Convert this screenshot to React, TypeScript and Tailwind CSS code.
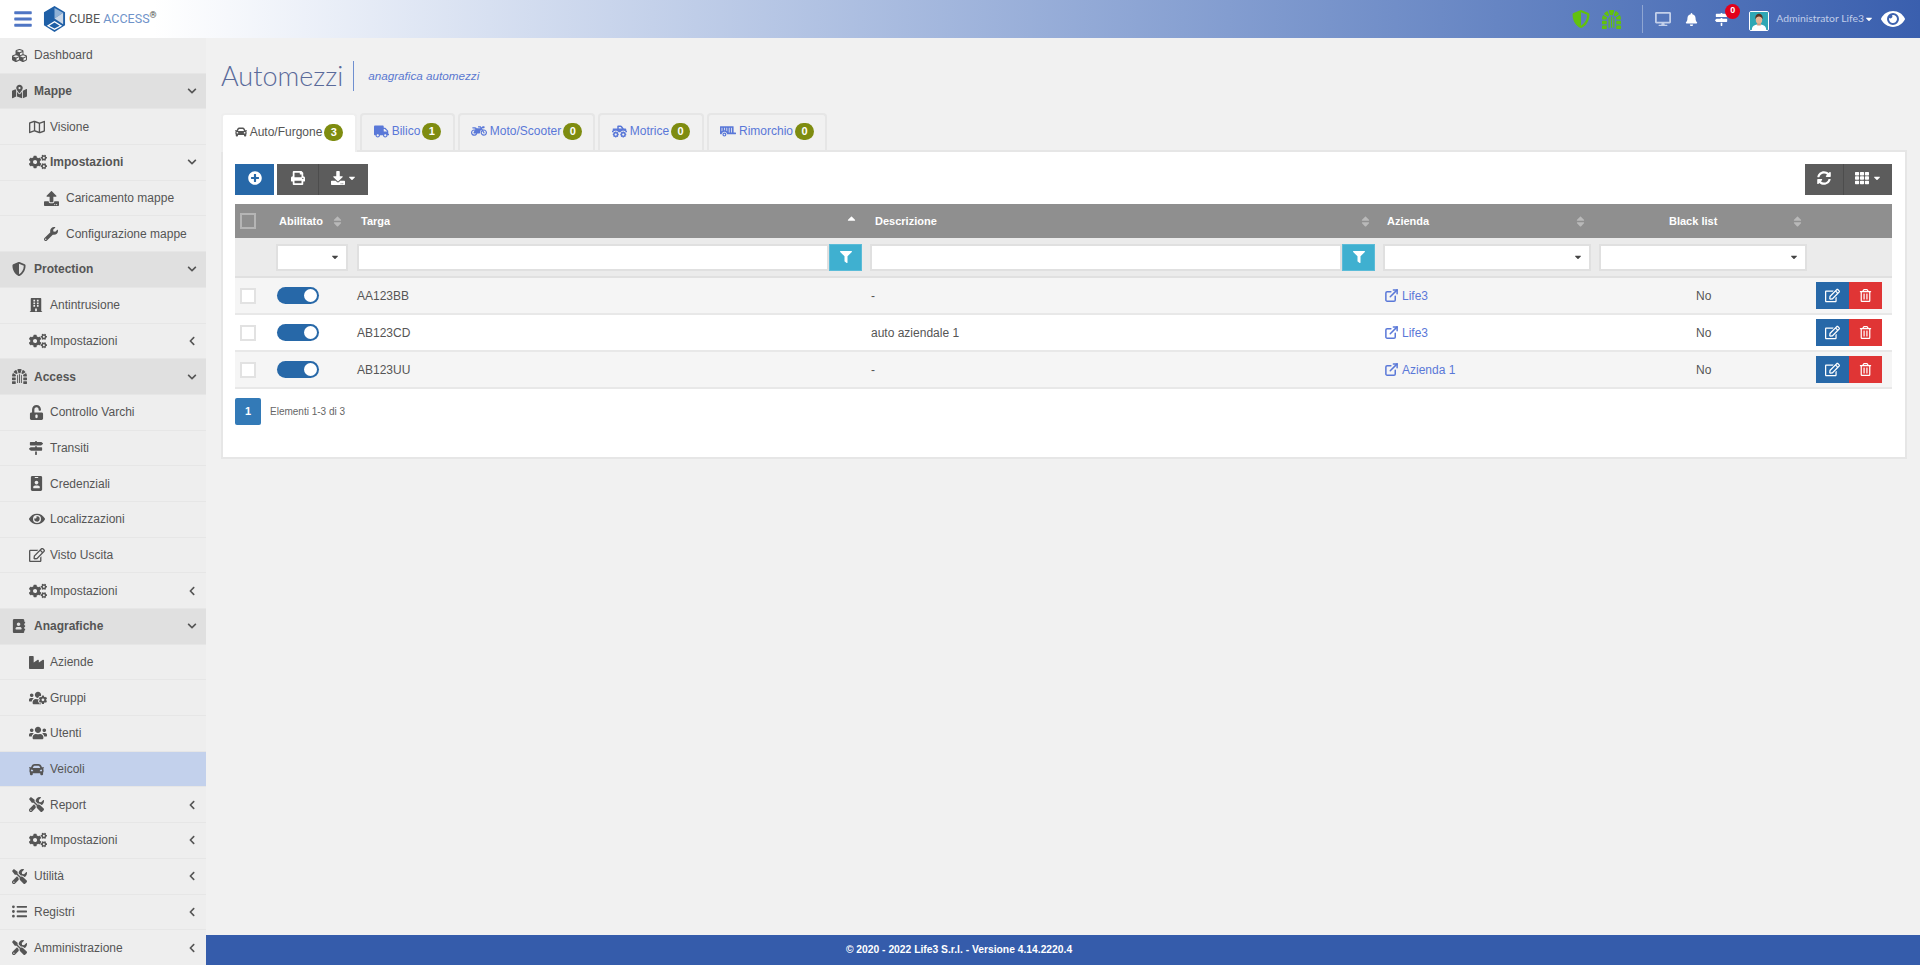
import type { ReactNode } from "react";
import { ExternalLink } from "lucide-react";
import {
  FaAddressBook, FaBars, FaBell, FaBuilding, FaCar, FaChevronDown, FaChevronLeft, FaCogs, FaCubes, FaDesktop,
  FaDownload, FaDungeon, FaEye, FaFilter, FaIdBadge, FaIndustry, FaListUl, FaMapMarkedAlt, FaMapSigns, FaMotorcycle,
  FaPlusCircle, FaPrint, FaRegEdit, FaRegMap, FaRegTrashAlt, FaShieldAlt, FaSort, FaSortUp, FaSyncAlt, FaTh, FaTools,
  FaTrailer, FaTruck, FaTruckMonster, FaUnlockAlt, FaUpload, FaUsers, FaUsersCog, FaWrench, FaCaretDown,
} from "react-icons/fa";

type Item = { label: string; icon: ReactNode; level: 0 | 1 | 2; section?: boolean; bold?: boolean; arrow?: "down" | "left"; active?: boolean };

const menu: Item[] = [
  { label: "Dashboard", icon: <FaCubes size={15} />, level: 0 },
  { label: "Mappe", icon: <FaMapMarkedAlt size={15} />, level: 0, section: true, bold: true, arrow: "down" },
  { label: "Visione", icon: <FaRegMap size={16} />, level: 1 },
  { label: "Impostazioni", icon: <FaCogs size={18} />, level: 1, bold: true, arrow: "down" },
  { label: "Caricamento mappe", icon: <FaUpload size={15} />, level: 2 },
  { label: "Configurazione mappe", icon: <FaWrench size={14} />, level: 2 },
  { label: "Protection", icon: <FaShieldAlt size={14} />, level: 0, section: true, bold: true, arrow: "down" },
  { label: "Antintrusione", icon: <FaBuilding size={14} />, level: 1 },
  { label: "Impostazioni", icon: <FaCogs size={18} />, level: 1, arrow: "left" },
  { label: "Access", icon: <FaDungeon size={15} />, level: 0, section: true, bold: true, arrow: "down" },
  { label: "Controllo Varchi", icon: <FaUnlockAlt size={15} />, level: 1 },
  { label: "Transiti", icon: <FaMapSigns size={14} />, level: 1 },
  { label: "Credenziali", icon: <FaIdBadge size={15} />, level: 1 },
  { label: "Localizzazioni", icon: <FaEye size={16} />, level: 1 },
  { label: "Visto Uscita", icon: <FaRegEdit size={16} />, level: 1 },
  { label: "Impostazioni", icon: <FaCogs size={18} />, level: 1, arrow: "left" },
  { label: "Anagrafiche", icon: <FaAddressBook size={14} />, level: 0, section: true, bold: true, arrow: "down" },
  { label: "Aziende", icon: <FaIndustry size={15} />, level: 1 },
  { label: "Gruppi", icon: <FaUsersCog size={18} />, level: 1 },
  { label: "Utenti", icon: <FaUsers size={18} />, level: 1 },
  { label: "Veicoli", icon: <FaCar size={15} />, level: 1, active: true },
  { label: "Report", icon: <FaTools size={15} />, level: 1, arrow: "left" },
  { label: "Impostazioni", icon: <FaCogs size={18} />, level: 1, arrow: "left" },
  { label: "Utilità", icon: <FaTools size={15} />, level: 0, arrow: "left" },
  { label: "Registri", icon: <FaListUl size={15} />, level: 0, arrow: "left" },
  { label: "Amministrazione", icon: <FaTools size={15} />, level: 0, arrow: "left" },
];

const tabs = [
  { label: "Auto/Furgone", icon: <FaCar size={12} />, count: 3, width: "w-[136px]", active: true },
  { label: "Bilico", icon: <FaTruck size={15} />, count: 1, width: "w-[95px]" },
  { label: "Moto/Scooter", icon: <FaMotorcycle size={16} />, count: 0, width: "w-[137px]" },
  { label: "Motrice", icon: <FaTruckMonster size={15} />, count: 0, width: "w-[106px]" },
  { label: "Rimorchio", icon: <FaTrailer size={16} />, count: 0, width: "w-[120px]" },
];

const rows = [
  { plate: "AA123BB", desc: "-", company: "Life3", striped: true },
  { plate: "AB123CD", desc: "auto aziendale 1", company: "Life3", striped: false },
  { plate: "AB123UU", desc: "-", company: "Azienda 1", striped: true },
];

const columns = "grid grid-cols-[37px_80px_514px_513px_216px_217px_80px]";

const CubeLogo = () => (
  <svg viewBox="0 0 24 27" className="w-[23px] h-[26px]">
    <polygon points="12,0 23,6.5 23,20 12,27 1,20 1,6.5" fill="#1f5fa6" />
    <polygon points="12,2 21,7 12,13" fill="#8fb1d6" />
    <polygon points="12,13 21,7 21,19" fill="#c9d6e6" />
    <polygon points="4,20.5 12,15.5 20,20.5 12,25" fill="#ffffff" />
    <polygon points="6.5,20.5 12,17.2 17.5,20.5 12,23.5" fill="#1f5fa6" />
  </svg>
);

const Avatar = () => (
  <svg viewBox="0 0 20 20" className="w-5 h-5 rounded-[2px] border border-white">
    <rect width="20" height="20" fill="#2fa7b4" />
    <path d="M2 20c0-4 3-6 8-6s8 2 8 6z" fill="#ffffff" />
    <rect x="8" y="11" width="4" height="4" fill="#d69c7c" />
    <ellipse cx="10" cy="8.5" rx="3.6" ry="4.4" fill="#e8b596" />
    <path d="M6 8c-.6-4 2-6 4-6s4.700 2 4 6c-1-2-2-3-4-3s-3 1-4 3z" fill="#5a3422" />
  </svg>
);

const Sidebar = () => (
  <aside className="w-[206px] shrink-0 bg-[#eeeeee]">
    {menu.map((item, i) => (
      <div
        key={i}
        className={`h-[35.7px] flex items-center border-b border-[#e6e6e6] text-[12px] text-[#555555] ${
          item.active ? "bg-[#c3d1ec]" : item.section ? "bg-[#e0e0e0]" : ""
        } ${item.level === 0 ? "pl-3" : item.level === 1 ? "pl-[29px]" : "pl-[44px]"}`}
      >
        <span className={`flex justify-start shrink-0 ${item.level === 1 ? "w-[21px]" : "w-[22px]"}`}>{item.icon}</span>
        <span className={item.bold ? "font-bold" : ""}>{item.label}</span>
        {item.arrow && (
          <span className="ml-auto mr-[9px]">
            {item.arrow === "down" ? <FaChevronDown size={10} /> : <FaChevronLeft size={10} />}
          </span>
        )}
      </div>
    ))}
  </aside>
);

const TopBar = () => (
  <header className="h-[38px] shrink-0 flex items-center bg-gradient-to-r from-[#ffffff] from-[8%] to-[#3a5fae] pl-[13px]">
    <FaBars size={20} className="text-[#4f75c4]" />
    <span className="ml-[10px]"><CubeLogo /></span>
    <span className="ml-[3px] font-['Roboto',sans-serif] text-[12.500px] text-[#555555]">
      CUBE <span className="text-[#6f93c9]">ACCESS</span>
      <sup className="text-[9px] text-[#555555] font-bold">®</sup>
    </span>
    <div className="ml-auto flex items-center h-full">
      <FaShieldAlt size={18} className="text-[#62c10d]" />
      <FaDungeon size={19} className="text-[#62c10d] ml-[12px]" />
      <div className="w-px h-[28px] bg-[#8fa6d2] ml-[21px]" />
      <FaDesktop size={16} className="text-[#c3d0ea] ml-[12px]" />
      <FaBell size={13} className="text-white ml-[14px]" />
      <span className="relative ml-[17px]">
        <FaMapSigns size={13} className="text-white" />
        <span className="absolute -top-[9px] left-[10px] w-[15px] h-[15px] rounded-full bg-[#e3001b] text-white text-[9px] font-bold flex items-center justify-center">0</span>
      </span>
      <span className="ml-[21px] mt-1"><Avatar /></span>
      <span className="ml-[7px] text-[10.400px] text-[#c0cde9] font-['Lato',sans-serif]">Administrator Life3</span>
      <FaCaretDown size={10} className="text-white" />
      <FaEye size={24} className="text-white ml-[7px] mr-[15px]" />
    </div>
  </header>
);

const Sort = ({ className = "" }: { className?: string }) => <FaSort size={13} className={`text-[#b9b9b9] ${className}`} />;

const SelectBox = ({ className }: { className: string }) => (
  <div className={`h-[27px] bg-white border-2 border-[#e0e0e0] flex items-center justify-end pr-[6px] ${className}`}>
    <FaCaretDown size={10} className="text-[#444444]" />
  </div>
);

const TextFilter = ({ className }: { className: string }) => (
  <div className={`flex ${className}`}>
    <div className="h-[27px] flex-1 bg-white border-2 border-[#e0e0e0]" />
    <button className="h-[27px] w-[33px] bg-[#3fb0d0] text-white flex items-center justify-center border border-[#5bbcd8]">
      <FaFilter size={12} />
    </button>
  </div>
);

const Checkbox = ({ header }: { header?: boolean }) => (
  <span className={`block w-4 h-4 border-2 ${header ? "border-[#b5b5b5] bg-[#8f8f8f]" : "border-[#e2e2e2] bg-white"}`} />
);

const Toggle = () => (
  <span className="flex items-center justify-end w-[42px] h-[17px] rounded-full bg-[#2768a8] pr-[2px]">
    <span className="w-[13px] h-[13px] rounded-full bg-white" />
  </span>
);

const VehiclesTable = () => (
  <div>
    <div className={`${columns} h-[34px] items-center bg-[#8f8f8f] text-white text-[11px] font-bold`}>
      <span className="pl-[5px]"><Checkbox header /></span>
      <span className="pl-[7px] flex items-center">Abilitato<Sort className="ml-[8px]" /></span>
      <span className="pl-[9px] pr-[8px] flex items-center justify-between">Targa<FaSortUp size={13} className="text-white" /></span>
      <span className="pl-[9px] pr-[7px] flex items-center justify-between">Descrizione<Sort /></span>
      <span className="pl-[8px] pr-[8px] flex items-center justify-between">Azienda<Sort /></span>
      <span className="pl-[74px] pr-[8px] flex items-center justify-between">Black list<Sort /></span>
      <span />
    </div>
    <div className={`${columns} h-[40px] items-center bg-[#ebebeb] border-b-2 border-[#e0e0e0]`}>
      <span />
      <span className="pl-[4px]"><SelectBox className="w-[72px]" /></span>
      <span className="pl-[5px] pr-[4px]"><TextFilter className="w-full" /></span>
      <span className="pl-[4px] pr-[4px]"><TextFilter className="w-full" /></span>
      <span className="pl-[4px]"><SelectBox className="w-[208px]" /></span>
      <span className="pl-[4px]"><SelectBox className="w-[208px]" /></span>
      <span />
    </div>
    {rows.map((row) => (
      <div key={row.plate} className={`${columns} h-[37px] items-center border-b-2 border-[#e8e8e8] text-[12px] text-[#555555] ${row.striped ? "bg-[#f5f5f5]" : "bg-white"}`}>
        <span className="pl-[5px]"><Checkbox /></span>
        <span className="pl-[5px]"><Toggle /></span>
        <span className="pl-[5px]">{row.plate}</span>
        <span className="pl-[5px]">{row.desc}</span>
        <span className="pl-[5px] flex items-center gap-[3px] text-[#5a78d8]">
          <ExternalLink size={15} strokeWidth={2.4} />
          {row.company}
        </span>
        <span className="pl-[101px]">No</span>
        <span className="pl-[4px] flex">
          <button className="w-[33px] h-[27px] bg-[#2768a8] text-white flex items-center justify-center"><FaRegEdit size={15} /></button>
          <button className="w-[33px] h-[27px] bg-[#e03535] text-white flex items-center justify-center"><FaRegTrashAlt size={13} /></button>
        </span>
      </div>
    ))}
  </div>
);

export default function App() {
  return (
    <div className="h-screen w-full flex flex-col overflow-hidden bg-[#f1f1f1] font-['Liberation_Sans',Arial,sans-serif]">
      <TopBar />
      <div className="flex flex-1 min-h-0">
        <Sidebar />
        <div className="flex-1 flex flex-col min-w-0">
          <main className="flex-1 pl-[15px] pr-[13px]">
            <div className="flex items-center mt-[22px] h-[32px]">
              <h1 className="font-['Lato',sans-serif] font-light text-[27px] leading-[32px] text-[#5a6a9a]">Automezzi</h1>
              <span className="w-px h-[30px] bg-[#6f8fd0] ml-[10px]" />
              <span className="ml-[14px] text-[11.700px] italic text-[#5a78d0]">anagrafica automezzi</span>
            </div>
            <div className="flex gap-[3px] mt-[21px] h-[37px] relative z-10">
              {tabs.map((tab) => (
                <div
                  key={tab.label}
                  className={`${tab.width} flex items-center justify-center gap-[2px] pb-[3px] rounded-t-[4px] border-2 border-b-0 text-[12px] ${
                    tab.active ? "bg-white border-[#eeeeee] text-[#555555] h-[39px]" : "bg-[#f1f1f1] border-[#e6e6e6] text-[#5a78d8] h-[37px]"
                  }`}
                >
                  <span className="mr-[1px]">{tab.icon}</span>
                  {tab.label}
                  <span className="w-[19px] h-[17px] rounded-full bg-[#7e8c10] text-white text-[11px] font-bold flex items-center justify-center">{tab.count}</span>
                </div>
              ))}
            </div>
            <section className="bg-white border-2 border-[#e6e6e6] h-[309px] pl-[12px] pr-[13px] pt-[12px]">
              <div className="flex justify-between h-[31px]">
                <div className="flex">
                  <button className="w-[39px] bg-[#2768a8] text-white flex items-center justify-center pb-[4px]"><FaPlusCircle size={14} /></button>
                  <div className="ml-[3px] flex bg-[#5c5c5c] text-white">
                    <button className="w-[42px] flex items-center justify-center border-r border-[#4d4d4d] pb-[4px]"><FaPrint size={14} /></button>
                    <button className="w-[49px] flex items-center justify-center pb-[4px] gap-[2px]"><FaDownload size={14} /><FaCaretDown size={10} /></button>
                  </div>
                </div>
                <div className="flex bg-[#5c5c5c] text-white">
                  <button className="w-[39px] flex items-center justify-center border-r border-[#4d4d4d] pb-[4px]"><FaSyncAlt size={14} /></button>
                  <button className="w-[48px] flex items-center justify-center pb-[4px] gap-[3px]"><FaTh size={14} /><FaCaretDown size={10} /></button>
                </div>
              </div>
              <div className="mt-[9px]"><VehiclesTable /></div>
              <div className="flex items-center mt-[9px]">
                <span className="w-[26px] h-[27px] rounded-[2px] bg-[#337ab7] text-white text-[11px] font-bold flex items-center justify-center">1</span>
                <span className="ml-[9px] text-[10px] text-[#666666]">Elementi 1-3 di 3</span>
              </div>
            </section>
          </main>
          <footer className="h-[30px] shrink-0 bg-[#355cab] text-white text-[10.300px] font-bold flex items-center justify-center pr-[208px]">
            © 2020 - 2022 Life3 S.r.l. - Versione 4.14.2220.4
          </footer>
        </div>
      </div>
    </div>
  );
}
